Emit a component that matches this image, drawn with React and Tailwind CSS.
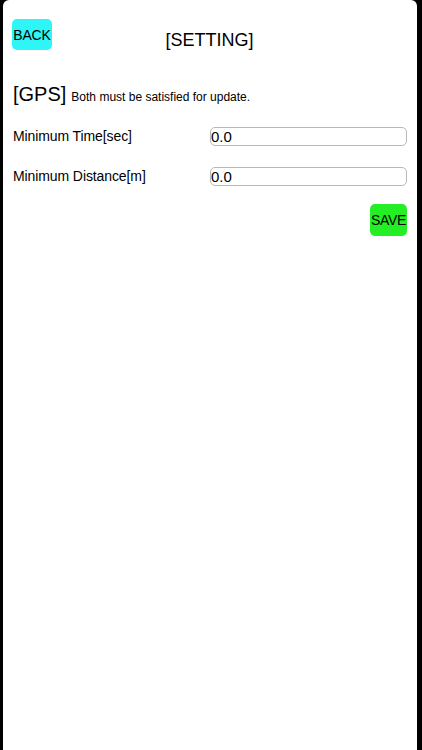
export default function App() {
  const rows = [
    { label: "Minimum Time[sec]", value: "0.0" },
    { label: "Minimum Distance[m]", value: "0.0" },
  ];

  return (
    <div className="flex h-[750px] w-full bg-black pl-[3px] pr-[5px] font-['Liberation_Sans',Arial,sans-serif] text-black">
      <div className="flex-1 rounded-t-[6px] bg-white">
        {/* Header */}
        <div className="grid grid-cols-[1fr_auto_1fr] items-start pl-[9px] pr-[10px] pt-[19px]">
          <div>
            <button className="flex h-[31px] w-[40px] items-center justify-center rounded-[5px] bg-[#2ef6f6] text-[14px] leading-none tracking-[-0.2px]">
              BACK
            </button>
          </div>
          <h1 className="mt-[10px] text-[18px] leading-[22px]">[SETTING]</h1>
          <div />
        </div>

        {/* GPS section */}
        <div className="mt-[31px] flex items-baseline gap-[5px] pl-[10px]">
          <span className="text-[20px] leading-[24px]">[GPS]</span>
          <span className="text-[12px]">Both must be satisfied for update.</span>
        </div>

        <div className="mt-[21px] flex flex-col gap-[21px] pl-[10px] pr-[10px]">
          {rows.map((row) => (
            <div key={row.label} className="grid grid-cols-[1fr_197px] items-center">
              <label className="text-[14px] leading-[19px] tracking-[-0.1px]">{row.label}</label>
              <input
                type="text"
                defaultValue={row.value}
                className="h-[19px] w-full rounded-[5px] border border-[#b8b8b8] px-0 text-[15px] leading-none outline-none"
              />
            </div>
          ))}
        </div>

        <div className="mt-[18px] flex justify-end pr-[10px]">
          <button className="flex h-[32px] w-[37px] items-center justify-center rounded-[5px] bg-[#24ef24] text-[14px] leading-none tracking-[-0.3px]">
            SAVE
          </button>
        </div>
      </div>
    </div>
  );
}
